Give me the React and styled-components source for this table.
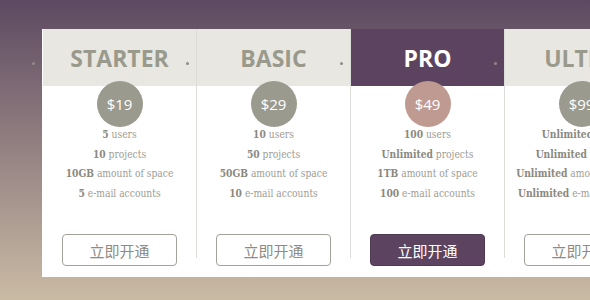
import React from 'react';
import styled, { createGlobalStyle } from 'styled-components';

const GlobalStyle = createGlobalStyle`
  * {
    margin: 0;
    padding: 0;
    box-sizing: border-box;
  }
  html, body {
    width: 590px;
    height: 300px;
    overflow: hidden;
  }
  body {
    background: linear-gradient(to bottom, #5d4961 0%, #cabba4 100%);
    font-family: 'Open Sans', 'Noto Sans', sans-serif;
  }
`;

const Page = styled.div`
  width: 590px;
  height: 300px;
  padding: 29px 0 0 42px;
  overflow: hidden;
`;

const Table = styled.div`
  display: flex;
  align-items: flex-start;
  width: 616px;
  background: #fff;
  padding-bottom: 19px;
`;

const Column = styled.div`
  position: relative;
  flex: 0 0 154px;
  display: flex;
  flex-direction: column;
  align-items: center;
  border-left: 1px solid ${(p) => (p.$first ? '#fff' : '#dedcd8')};
`;

const Dot = styled.span`
  position: absolute;
  left: -11px;
  top: 33px;
  width: 3px;
  height: 3px;
  border-radius: 50%;
  background: #8e8d84;
`;

const Header = styled.div`
  align-self: stretch;
  height: 57px;
  display: flex;
  align-items: center;
  justify-content: center;
  background: ${(p) => (p.$featured ? '#5c4460' : '#e8e7e2')};
  color: ${(p) => (p.$featured ? '#fff' : '#9a9a8c')};
  font-size: 23px;
  font-weight: 700;
  white-space: nowrap;
  overflow: hidden;
`;

const Price = styled.div`
  width: 46px;
  height: 46px;
  margin-top: -5px;
  border-radius: 50%;
  display: flex;
  align-items: center;
  justify-content: center;
  background: ${(p) => (p.$featured ? '#bf9a91' : '#9a9a8e')};
  color: #fff;
  font-size: 15px;
`;

const Features = styled.ul`
  list-style: none;
  margin-top: -2px;
  text-align: center;
  font-family: 'DejaVu Serif Condensed', 'DejaVu Serif', serif;
  font-stretch: condensed;
  font-size: 10.2px;
  line-height: 19.5px;
  color: #9e9c93;
  white-space: nowrap;

  b {
    color: #8b897f;
    font-weight: 700;
  }
`;

const Button = styled.button`
  width: 115px;
  height: 32px;
  margin-top: 31px;
  margin-bottom: -8px;
  border-radius: 4px;
  border: 1px solid ${(p) => (p.$featured ? '#4e3a52' : '#a3a19a')};
  background: ${(p) => (p.$featured ? '#5c4460' : '#fff')};
  color: ${(p) => (p.$featured ? '#fff' : '#8d8b84')};
  font-family: 'Noto Sans CJK SC', 'Noto Sans', sans-serif;
  font-size: 15px;
  cursor: pointer;
`;

const plans = [
  {
    name: 'STARTER',
    price: '$19',
    features: [
      ['5', 'users'],
      ['10', 'projects'],
      ['10GB', 'amount of space'],
      ['5', 'e-mail accounts'],
    ],
  },
  {
    name: 'BASIC',
    price: '$29',
    features: [
      ['10', 'users'],
      ['50', 'projects'],
      ['50GB', 'amount of space'],
      ['10', 'e-mail accounts'],
    ],
  },
  {
    name: 'PRO',
    price: '$49',
    featured: true,
    features: [
      ['100', 'users'],
      ['Unlimited', 'projects'],
      ['1TB', 'amount of space'],
      ['100', 'e-mail accounts'],
    ],
  },
  {
    name: 'ULTRA',
    price: '$99',
    features: [
      ['Unlimited', 'users'],
      ['Unlimited', 'projects'],
      ['Unlimited', 'amount of space'],
      ['Unlimited', 'e-mail accounts'],
    ],
  },
];

export default function App() {
  return (
    <>
      <GlobalStyle />
      <Page>
        <Table>
          {plans.map((plan, i) => (
            <Column key={plan.name} $first={i === 0}>
              <Dot />
              <Header $featured={plan.featured}>{plan.name}</Header>
              <Price $featured={plan.featured}>{plan.price}</Price>
              <Features>
                {plan.features.map(([strong, rest]) => (
                  <li key={rest}>
                    <b>{strong}</b> {rest}
                  </li>
                ))}
              </Features>
              <Button $featured={plan.featured}>立即开通</Button>
            </Column>
          ))}
        </Table>
      </Page>
    </>
  );
}
